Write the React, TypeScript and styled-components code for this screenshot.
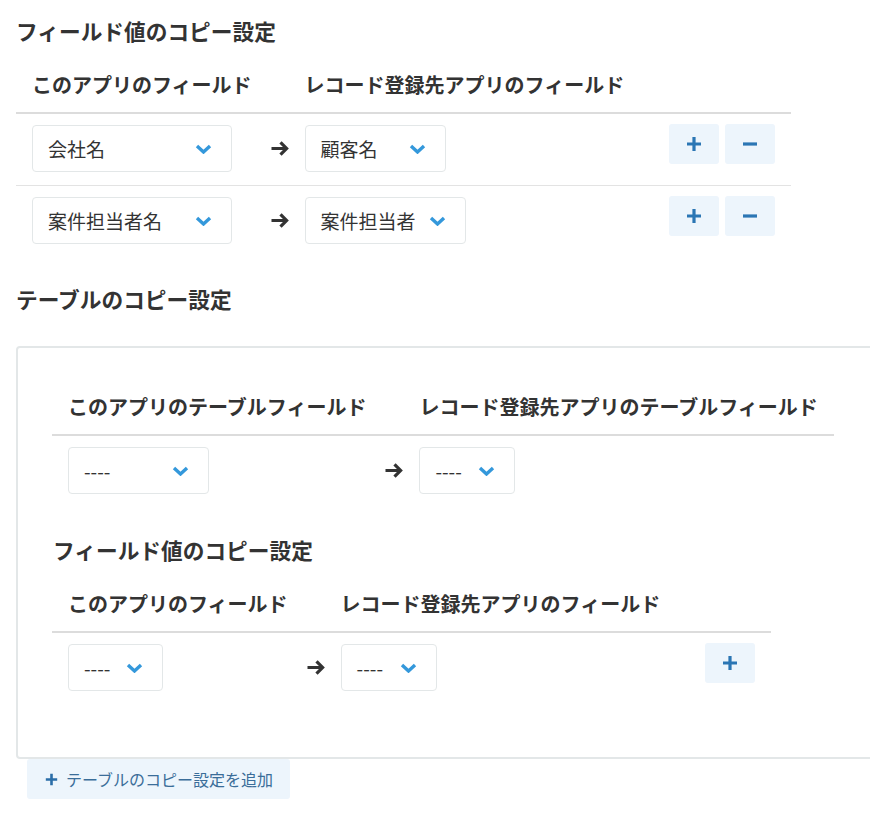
import styled, { createGlobalStyle } from "styled-components";

const GlobalStyle = createGlobalStyle`
  html, body {
    margin: 0;
    padding: 0;
    overflow: hidden;
    background: #fff;
  }
  body {
    font-family: "Noto Sans CJK JP", "Noto Sans", sans-serif;
    color: #333;
  }
`;

const Page = styled.div`
  padding: 14px 0 0 16px;
`;

const SectionTitle = styled.div<{ $gap?: number }>`
  margin-top: ${(p) => p.$gap ?? 0}px;
  font-size: 21.7px;
  font-weight: 700;
  line-height: 33px;
  white-space: nowrap;
`;

const Table = styled.table`
  margin-top: 7px;
  border-collapse: separate;
  border-spacing: 0;
`;

const Th = styled.th`
  padding: 16px 16px 12px;
  font-size: 20px;
  font-weight: 700;
  line-height: 30px;
  text-align: left;
  white-space: nowrap;
  border-bottom: 2px solid #dcdcdc;
`;

const FromTh = styled(Th)`
  padding-right: 37px;
`;

const ActionTh = styled(Th)`
  padding: 0;
`;

const Tr = styled.tr`
  & + & > td {
    border-top: 1px solid #e3e3e3;
  }
`;

const Td = styled.td`
  padding: 11px 16px 13px;
  vertical-align: top;
`;

const FromTd = styled(Td)`
  padding-right: 0;
`;

const ActionTd = styled(Td)`
  padding: 10px 16px 13px 29px;
`;

const FromCell = styled.div`
  display: flex;
  align-items: center;
  justify-content: space-between;
  gap: 12px;
  height: 47px;
`;

const Select = styled.div<{ $width: number }>`
  box-sizing: border-box;
  width: ${(p) => p.$width}px;
  height: 47px;
  display: flex;
  align-items: center;
  padding: 0 19px 0 15px;
  border: 1px solid #e3e7e8;
  border-radius: 4px;
  background: #fff;
  font-size: 19px;
  white-space: nowrap;
`;

const SelectText = styled.span`
  flex: 1;
`;

const Buttons = styled.div`
  display: flex;
  gap: 6px;
`;

const IconButton = styled.button`
  width: 50px;
  height: 40px;
  display: inline-flex;
  align-items: center;
  justify-content: center;
  padding: 0;
  border: none;
  border-radius: 3px;
  background: #edf5fc;
  cursor: pointer;
`;

const TableBox = styled.div`
  box-sizing: border-box;
  width: 900px;
  margin-top: 31px;
  padding: 21px 0 53px 34px;
  border: 2px solid #e3e7e8;
  border-radius: 4px;
`;

const SubTitle = styled(SectionTitle)`
  padding-left: 1px;
`;

const AddButton = styled.button`
  height: 40px;
  margin-left: 11px;
  display: inline-flex;
  align-items: center;
  gap: 8px;
  padding: 0 17px 0 18px;
  border: none;
  border-radius: 3px;
  background: #edf5fc;
  color: #3a6d99;
  font-family: inherit;
  font-size: 16px;
  cursor: pointer;
`;

const Chevron = () => (
  <svg width="17" height="10" viewBox="0 0 17 10">
    <path d="M2 2 L8.5 8 L15 2" fill="none" stroke="#3498db" strokeWidth="3.4" />
  </svg>
);

const Arrow = () => (
  <svg width="18" height="15" viewBox="0 0 18 15">
    <path d="M0.5 7.5 H15.5 M9.5 1.3 L15.6 7.5 L9.5 13.7" fill="none" stroke="#333" strokeWidth="3.2" />
  </svg>
);

const Plus = ({ size = 16, color = "#2b76b4" }: { size?: number; color?: string }) => (
  <svg width={size} height={size} viewBox="0 0 16 16">
    <path d="M8 1 V15 M1 8 H15" fill="none" stroke={color} strokeWidth="3.2" />
  </svg>
);

const Minus = () => (
  <svg width="16" height="16" viewBox="0 0 16 16">
    <path d="M1 8 H15" fill="none" stroke="#2b76b4" strokeWidth="3.2" />
  </svg>
);

type Pick = { text: string; width: number };

type Row = { from: Pick; to: Pick; removable?: boolean };

const SelectBox = ({ pick }: { pick: Pick }) => (
  <Select $width={pick.width}>
    <SelectText>{pick.text}</SelectText>
    <Chevron />
  </Select>
);

const MappingTable = ({
  fromLabel,
  toLabel,
  rows,
  actions = true,
}: {
  fromLabel: string;
  toLabel: string;
  rows: Row[];
  actions?: boolean;
}) => (
  <Table>
    <thead>
      <tr>
        <FromTh>{fromLabel}</FromTh>
        <Th>{toLabel}</Th>
        {actions && <ActionTh />}
      </tr>
    </thead>
    <tbody>
      {rows.map((row, i) => (
        <Tr key={i}>
          <FromTd>
            <FromCell>
              <SelectBox pick={row.from} />
              <Arrow />
            </FromCell>
          </FromTd>
          <Td>
            <SelectBox pick={row.to} />
          </Td>
          {actions && (
            <ActionTd>
              <Buttons>
                <IconButton>
                  <Plus />
                </IconButton>
                {row.removable && (
                  <IconButton>
                    <Minus />
                  </IconButton>
                )}
              </Buttons>
            </ActionTd>
          )}
        </Tr>
      ))}
    </tbody>
  </Table>
);

const fieldRows: Row[] = [
  { from: { text: "会社名", width: 200 }, to: { text: "顧客名", width: 141 }, removable: true },
  { from: { text: "案件担当者名", width: 200 }, to: { text: "案件担当者", width: 161 }, removable: true },
];

export default function App() {
  return (
    <>
      <GlobalStyle />
      <Page>
        <SectionTitle>フィールド値のコピー設定</SectionTitle>
        <MappingTable
          fromLabel="このアプリのフィールド"
          toLabel="レコード登録先アプリのフィールド"
          rows={fieldRows}
        />

        <SectionTitle $gap={25}>テーブルのコピー設定</SectionTitle>
        <TableBox>
          <MappingTable
            fromLabel="このアプリのテーブルフィールド"
            toLabel="レコード登録先アプリのテーブルフィールド"
            rows={[{ from: { text: "----", width: 141 }, to: { text: "----", width: 96 } }]}
            actions={false}
          />
          <SubTitle $gap={26}>フィールド値のコピー設定</SubTitle>
          <MappingTable
            fromLabel="このアプリのフィールド"
            toLabel="レコード登録先アプリのフィールド"
            rows={[{ from: { text: "----", width: 95 }, to: { text: "----", width: 96 } }]}
          />
        </TableBox>
        <AddButton>
          <Plus size={13} color="#2b6ea8" />
          テーブルのコピー設定を追加
        </AddButton>
      </Page>
    </>
  );
}
